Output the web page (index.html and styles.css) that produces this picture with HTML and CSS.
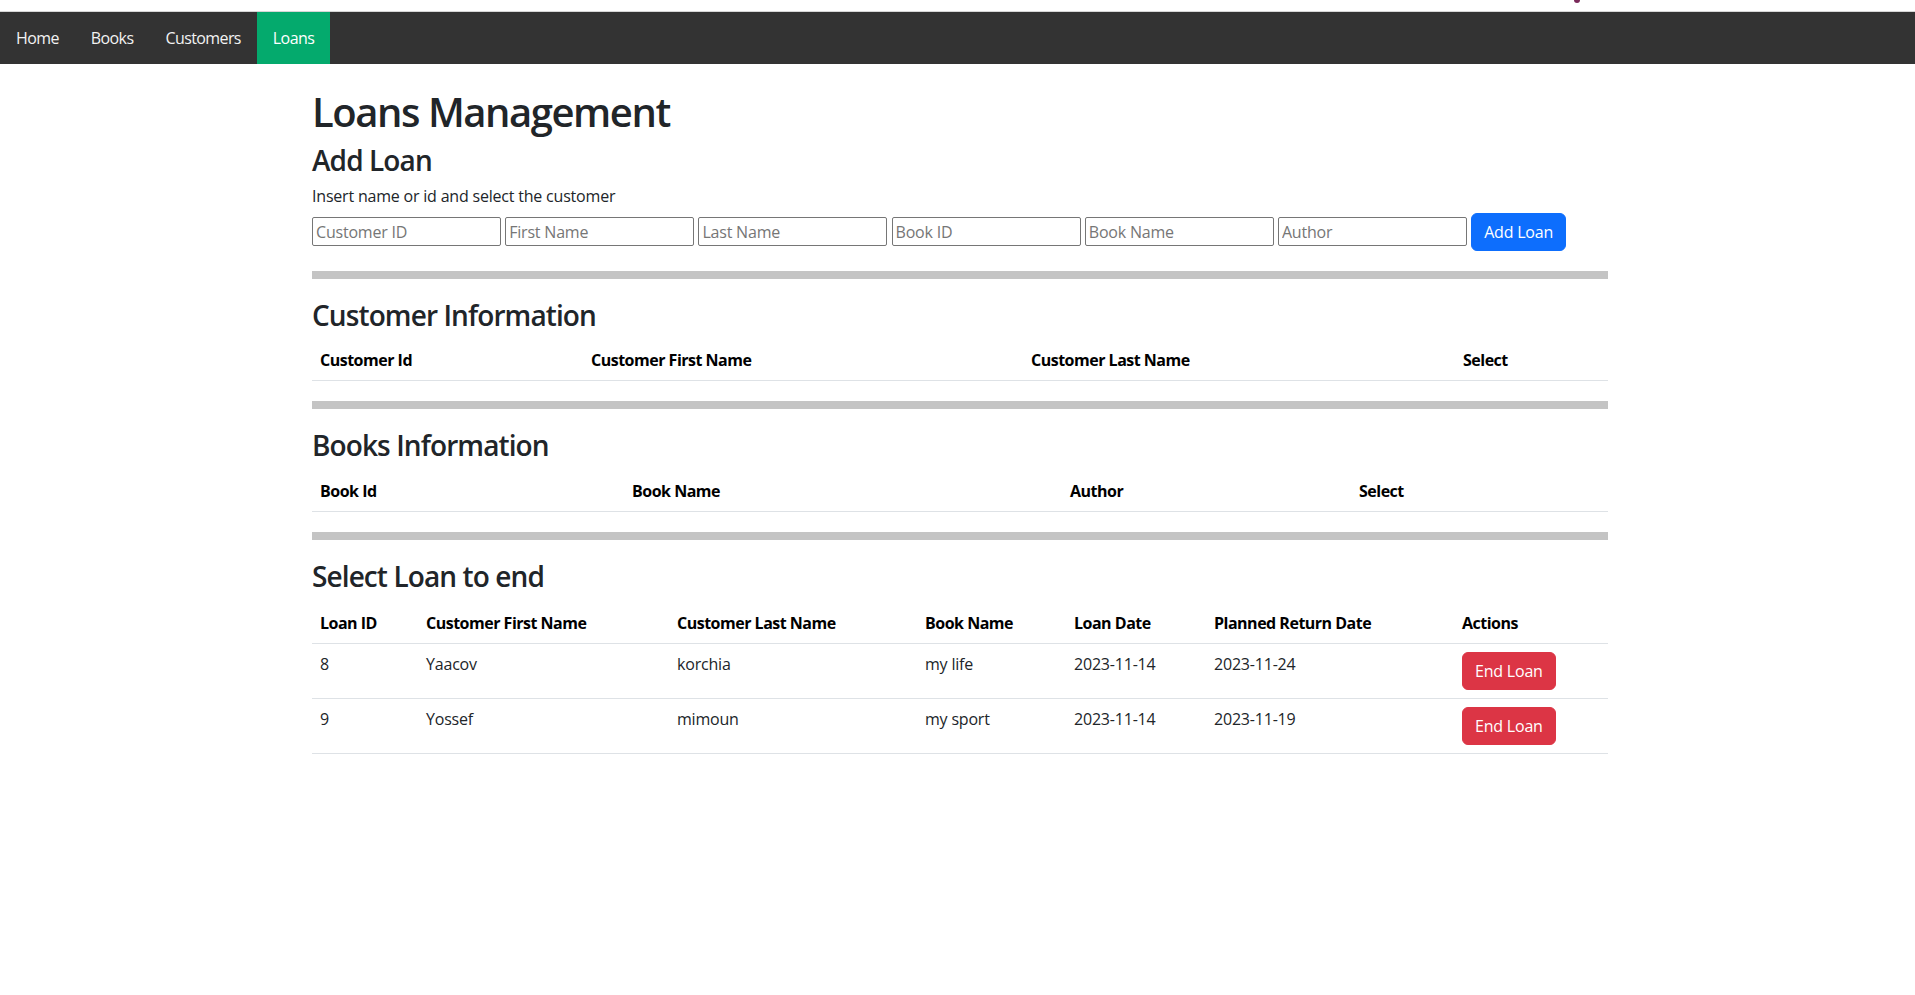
FILE: index.html
```html
<!DOCTYPE html>
<html lang="en">
<head>
<meta charset="utf-8">
<title>Loans Management</title>
<link rel="stylesheet" href="styles.css">
</head>
<body>
<div class="topstrip"><span class="topmark"></span></div>
<nav class="topnav">
  <a href="#">Home</a>
  <a href="#">Books</a>
  <a href="#">Customers</a>
  <a href="#" class="active">Loans</a>
</nav>
<main class="container">
  <h1>Loans Management</h1>
  <h3>Add Loan</h3>
  <div class="hint">Insert name or id and select the customer</div>
  <form class="add-row">
    <input type="text" placeholder="Customer ID">
    <input type="text" placeholder="First Name">
    <input type="text" placeholder="Last Name">
    <input type="text" placeholder="Book ID">
    <input type="text" placeholder="Book Name">
    <input type="text" placeholder="Author">
    <button type="button" class="btn btn-primary">Add Loan</button>
  </form>
  <hr class="sep">

  <h3>Customer Information</h3>
  <table class="table">
    <colgroup>
      <col class="w271"><col class="w440"><col class="w432"><col class="w153">
    </colgroup>
    <thead>
      <tr><th>Customer Id</th><th>Customer First Name</th><th>Customer Last Name</th><th>Select</th></tr>
    </thead>
    <tbody></tbody>
  </table>
  <hr class="sep">

  <h3>Books Information</h3>
  <table class="table">
    <colgroup>
      <col class="w312"><col class="w438"><col class="w289"><col class="w257">
    </colgroup>
    <thead>
      <tr><th>Book Id</th><th>Book Name</th><th>Author</th><th>Select</th></tr>
    </thead>
    <tbody></tbody>
  </table>
  <hr class="sep">

  <h3 class="loans-title">Select Loan to end</h3>
  <table class="table">
    <colgroup>
      <col class="w106"><col class="w251"><col class="w248"><col class="w149"><col class="w140"><col class="w248"><col class="w154">
    </colgroup>
    <thead>
      <tr><th>Loan ID</th><th>Customer First Name</th><th>Customer Last Name</th><th>Book Name</th><th>Loan Date</th><th>Planned Return Date</th><th>Actions</th></tr>
    </thead>
    <tbody>
      <tr><td>8</td><td>Yaacov</td><td>korchia</td><td>my life</td><td>2023-11-14</td><td>2023-11-24</td><td><button type="button" class="btn btn-danger">End Loan</button></td></tr>
      <tr><td>9</td><td>Yossef</td><td>mimoun</td><td>my sport</td><td>2023-11-14</td><td>2023-11-19</td><td><button type="button" class="btn btn-danger">End Loan</button></td></tr>
    </tbody>
  </table>
</main>
</body>
</html>
```

FILE: styles.css
```css
* { box-sizing: border-box; }

html, body {
  margin: 0;
  background: #fff;
}

body {
  font-family: "Open Sans", "Noto Sans", sans-serif;
  font-size: 16px;
  line-height: 1.5;
  letter-spacing: -0.2px;
  color: #212529;
}

.topstrip {
  height: 12px;
  border-bottom: 1px solid #d6d6d6;
  display: flex;
  justify-content: flex-start;
}

.topmark {
  width: 6px;
  height: 3px;
  margin-left: 1574px;
  border-radius: 0 0 3px 3px;
  background: #7a2a5a;
}

.topnav {
  display: flex;
  height: 52px;
  background: #333333;
}

.topnav a {
  display: block;
  padding: 14px 16px;
  font-size: 16px;
  line-height: 24px;
  letter-spacing: -0.6px;
  color: #f2f2f2;
  text-decoration: none;
}

.topnav a.active {
  background: #04aa6d;
  color: #ffffff;
}

.container {
  max-width: 1320px;
  margin: 0 auto;
  padding: 24px 9.5px 0 14.5px;
}

h1 {
  font-size: 40px;
  font-weight: 600;
  line-height: 1.2;
  letter-spacing: -1.45px;
  margin: 0 0 8px;
}

h3 {
  font-size: 28px;
  font-weight: 600;
  line-height: 1.2;
  letter-spacing: -0.9px;
  margin: 0 0 8px;
}

h3.loans-title {
  margin-top: 1px;
  margin-bottom: 10px;
}

.hint {
  line-height: 24px;
  margin-top: -2px;
}

.add-row {
  display: flex;
  align-items: center;
  gap: 4.2px;
  margin: 5px 0 0;
}

.add-row input {
  width: 189px;
  height: 29px;
  padding: 1px 3px;
  border: 1px solid #767676;
  border-radius: 2px;
  font-family: inherit;
  font-size: 16px;
  letter-spacing: -0.2px;
  color: #212529;
  background: #fff;
}

.add-row input::placeholder {
  color: #767676;
}

.btn {
  display: inline-block;
  padding: 6px 12px;
  font-family: inherit;
  font-size: 16px;
  line-height: 24px;
  letter-spacing: -0.2px;
  border: 1px solid transparent;
  border-radius: 6px;
  color: #fff;
  cursor: pointer;
}

.btn-primary {
  background: #0d6efd;
  border-color: #0d6efd;
}

.btn-danger {
  background: #dc3545;
  border-color: #dc3545;
}

.sep {
  height: 8px;
  margin: 20px 0;
  border: 0;
  background: #c4c4c4;
}

.table {
  width: 100%;
  table-layout: fixed;
  border-collapse: collapse;
  margin-bottom: 16px;
  color: #212529;
}

.table th,
.table td {
  padding: 8px;
  text-align: left;
  vertical-align: top;
  border-bottom: 1px solid #dee2e6;
}

.table th {
  font-weight: 700;
  letter-spacing: -0.5px;
  color: #000;
}

.w271 { width: 271px; }
.w440 { width: 440px; }
.w432 { width: 432px; }
.w153 { width: 153px; }
.w312 { width: 312px; }
.w438 { width: 438px; }
.w289 { width: 289px; }
.w257 { width: 257px; }
.w106 { width: 106px; }
.w251 { width: 251px; }
.w248 { width: 248px; }
.w149 { width: 149px; }
.w140 { width: 140px; }
.w154 { width: 154px; }
```
